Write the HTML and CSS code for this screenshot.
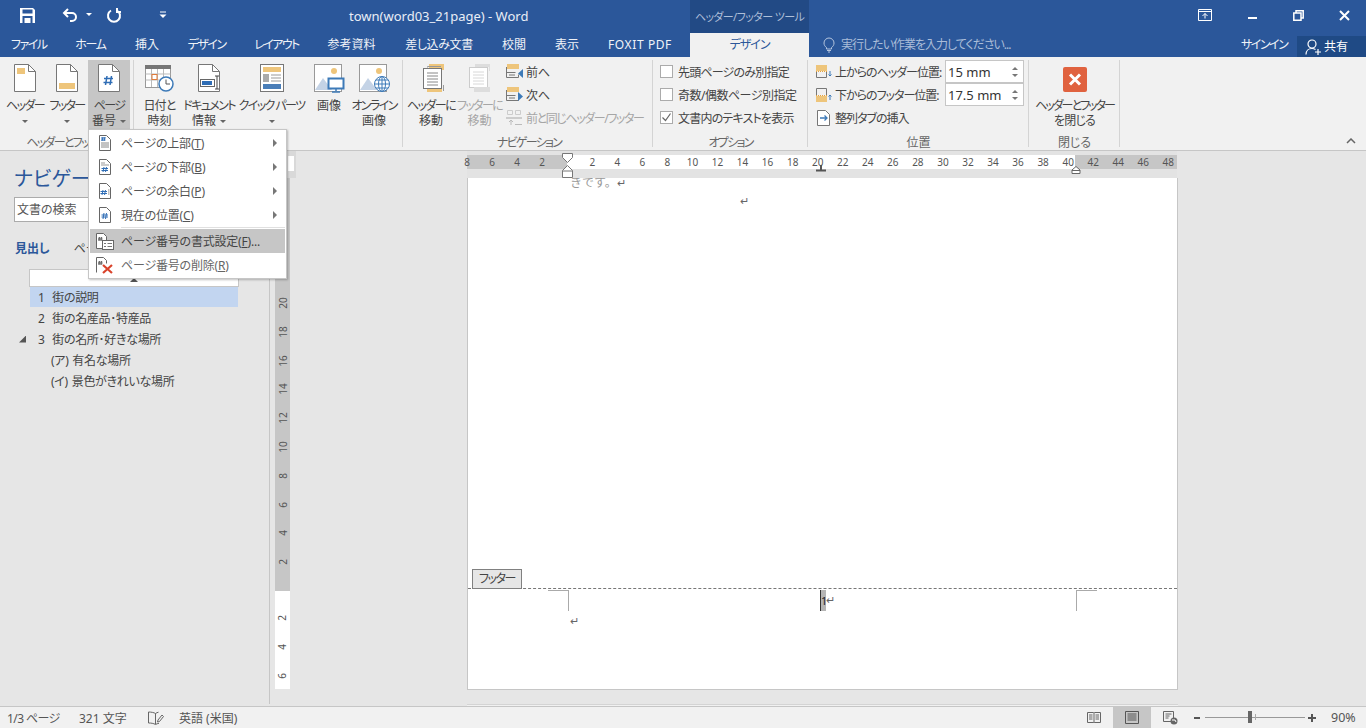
FILE: index.html
```html
<!DOCTYPE html>
<html lang="ja">
<head>
    <meta charset="UTF-8">
    <title>town(word03_21page) - Word</title>
    <link rel="stylesheet" href="styles.css">
</head>
<body>
    <!-- Title bar -->
    <div class="titlebar">
        <div class="qat">
            <svg class="qat-save" width="15" height="15" viewBox="0 0 15 15"><path d="M0 0h13l2 2v13H0z" fill="#fff"/><rect x="2.500" y="1.500" width="10" height="4" fill="#2b579a"/><path d="M2.500 8h10v7h-2V10h-6v5h-2z" fill="#2b579a"/></svg>
            <svg class="qat-undo" width="16" height="16" viewBox="0 0 16 16"><path d="M6 2 2 6l4 4M2 6h8a4 4 0 0 1 0 8H8" fill="none" stroke="#fff" stroke-width="2"/></svg>
            <span class="caret-w qat-caret"></span>
            <svg class="qat-redo" width="16" height="16" viewBox="0 0 16 16"><path d="M5 3.500a6 6 0 1 0 6 0" fill="none" stroke="#fff" stroke-width="2"/><path d="M11 1v4h4" fill="none" stroke="#fff" stroke-width="2"/></svg>
            <svg class="qat-more" width="8" height="8" viewBox="0 0 8 8"><path d="M1 1h6" stroke="#fff"/><path d="M0.500 3.500h7L4 7z" fill="#fff"/></svg>
        </div>
        <div class="doc-title">town(word03_21page) - Word</div>
        <div class="context-title">ヘッダー/フッター ツール</div>
        <div class="win-controls">
            <svg width="14" height="12" viewBox="0 0 14 12"><path d="M.5.500h13v11H.5zM.5 2.500h13" fill="none" stroke="#fff"/><path d="M7 9.500V4.500M4.500 7 7 4.500 9.500 7" fill="none" stroke="#fff"/></svg>
            <svg width="10" height="10" viewBox="0 0 10 10"><rect x="1" y="7" width="9" height="2" fill="#fff"/></svg>
            <svg width="11" height="11" viewBox="0 0 11 11"><path d="M3 2.500V.8h7.200V8H8.500M.8 3h7.200v7.200H.8z" fill="none" stroke="#fff" stroke-width="1.500"/></svg>
            <svg width="11" height="11" viewBox="0 0 11 11"><path d="m1 1 9 9M10 1l-9 9" stroke="#fff" stroke-width="2"/></svg>
        </div>
    </div>

    <!-- Tabs -->
    <div class="tabbar">
        <div class="tab tab-file">ファイル</div>
        <div class="tab tab-home">ホーム</div>
        <div class="tab tab-ins">挿入</div>
        <div class="tab tab-des">デザイン</div>
        <div class="tab tab-lay">レイアウト</div>
        <div class="tab tab-ref">参考資料</div>
        <div class="tab tab-mail">差し込み文書</div>
        <div class="tab tab-rev">校閲</div>
        <div class="tab tab-view">表示</div>
        <div class="tab tab-fox">FOXIT PDF</div>
        <div class="tab tab-active">デザイン</div>
        <div class="tell-me">
            <svg width="12" height="16" viewBox="0 0 12 16"><path d="M3.500 10.500C2 9.500 1 8 1 6a5 5 0 0 1 10 0c0 2-1 3.500-2.500 4.500v1.500h-5z" fill="none" stroke="#b5c5de"/><path d="M4 13.500h4M5 15h2" stroke="#b5c5de"/></svg>
            <span>実行したい作業を入力してください...</span>
        </div>
        <div class="signin">サインイン</div>
        <div class="share">
            <svg width="17" height="16" viewBox="0 0 17 16"><circle cx="7" cy="5" r="4" fill="none" stroke="#fff" stroke-width="1.200"/><path d="M1 15.500c0-3.500 2.500-6 6-6 1.500 0 2.500.4 3.500 1" fill="none" stroke="#fff" stroke-width="1.200"/><path d="M13 10v6M10 13h6" stroke="#fff" stroke-width="1.200"/></svg>
            <span>共有</span>
        </div>
    </div>

    <!-- Ribbon -->
    <div class="ribbon">
        <div class="group group-hf">
            <div class="group-body">
                <div class="big-btn w-header">
                    <svg width="26" height="30" viewBox="0 0 26 30"><path d="M2.500 1.500h14l7 7v20h-21z" fill="#fff" stroke="#777"/><path d="M16.500 1.500v7h7" fill="none" stroke="#777"/><rect x="5" y="5" width="8" height="6" fill="#eec57b"/></svg>
                    <span>ヘッダー</span><i class="caret"></i>
                </div>
                <div class="big-btn w-footer">
                    <svg width="26" height="30" viewBox="0 0 26 30"><path d="M2.500 1.500h14l7 7v20h-21z" fill="#fff" stroke="#777"/><path d="M16.500 1.500v7h7" fill="none" stroke="#777"/><rect x="5" y="20" width="16" height="6" fill="#eec57b"/></svg>
                    <span>フッター</span><i class="caret"></i>
                </div>
                <div class="big-btn w-pagenum is-open">
                    <svg width="26" height="30" viewBox="0 0 26 30"><path d="M2.500 1.500h14l7 7v20h-21z" fill="#fff" stroke="#777"/><path d="M16.500 1.500v7h7" fill="none" stroke="#777"/><path d="M11 13l-1.500 9M15.500 13 14 22M8 15.500h9M7.500 19.500h9" fill="none" stroke="#2f6db5" stroke-width="1.500"/></svg>
                    <span>ページ</span><span class="kj">番号<i class="caret inline"></i></span>
                </div>
            </div>
            <div class="group-label label-hf">ヘッダーとフッター</div>
        </div>

        <div class="group group-ins">
            <div class="group-body">
                <div class="big-btn w-date">
                    <svg width="32" height="30" viewBox="0 0 32 30"><rect x="2.500" y="2.500" width="25" height="22" fill="#fff" stroke="#999"/><rect x="2" y="2" width="26" height="4" fill="#777"/><path d="M2.500 11h25M2.500 17h25M8.500 6v18M14.500 6v18M20.500 6v18" stroke="#bbb"/><rect x="9" y="11.500" width="5" height="5" fill="#fff" stroke="#e07b39"/><circle cx="23" cy="21" r="7" fill="#fff" stroke="#3d7ab8" stroke-width="1.500"/><path d="M23 16.500V21h4" fill="none" stroke="#555"/></svg>
                    <span class="slight">日付と</span><span class="kj">時刻</span>
                </div>
                <div class="big-btn w-docinfo">
                    <svg width="26" height="30" viewBox="0 0 26 30"><path d="M2.500 1.500h14l7 7v20h-21z" fill="#fff" stroke="#777"/><path d="M16.500 1.500v7h7" fill="none" stroke="#777"/><rect x="4.500" y="16.500" width="14" height="7" fill="#fff" stroke="#666"/><rect x="6" y="18" width="10" height="4" fill="#2f6db5"/><path d="M19 13h4M21 13v13M19 26h4" fill="none" stroke="#444"/></svg>
                    <span>ドキュメント</span><span class="kj">情報<i class="caret inline"></i></span>
                </div>
                <div class="big-btn w-quick">
                    <svg width="26" height="30" viewBox="0 0 26 30"><rect x="1.500" y="1.500" width="23" height="27" fill="#fff" stroke="#777"/><rect x="4" y="4" width="18" height="5" fill="#eec57b"/><rect x="4" y="11" width="6" height="8" fill="#aaa"/><path d="M12 12h10M12 15h10M12 18h10" stroke="#999"/><rect x="4" y="21" width="18" height="5" fill="#4a7eb8"/></svg>
                    <span>クイック パーツ</span><i class="caret"></i>
                </div>
                <div class="big-btn w-pic">
                    <svg width="32" height="30" viewBox="0 0 32 30"><rect x="1.500" y="1.500" width="27" height="27" fill="#fff" stroke="#999"/><circle cx="21" cy="8" r="3" fill="#eec57b"/><path d="M2 27 10 15l9 12z" fill="#c4d3e6"/><rect x="15.500" y="15.500" width="15" height="10" fill="#fff" stroke="#3d7ab8" stroke-width="2"/><path d="M23 26v2M19 29h8" stroke="#3d7ab8" stroke-width="1.500"/></svg>
                    <span class="kj">画像</span>
                </div>
                <div class="big-btn w-online">
                    <svg width="32" height="30" viewBox="0 0 32 30"><rect x="1.500" y="1.500" width="27" height="27" fill="#fff" stroke="#999"/><circle cx="21" cy="8" r="3" fill="#eec57b"/><path d="M2 27 10 15l9 12z" fill="#c4d3e6"/><circle cx="24" cy="21" r="7.500" fill="#fff" stroke="#3d7ab8"/><path d="M16.500 21h15M24 13.500v15M18 17h12M18 25h12" stroke="#3d7ab8" fill="none"/><ellipse cx="24" cy="21" rx="3.500" ry="7.500" fill="none" stroke="#3d7ab8"/></svg>
                    <span>オンライン</span><span class="kj">画像</span>
                </div>
            </div>
            <div class="group-label">挿入</div>
        </div>

        <div class="group group-nav">
            <div class="group-body">
                <div class="big-btn w-gohead">
                    <svg width="26" height="30" viewBox="0 0 26 30"><rect x="8" y="1" width="15" height="6" fill="#eec57b"/><path d="M6.500 4.500v-1H20" fill="none" stroke="#999"/><rect x="2.500" y="5.500" width="18" height="20" fill="#fff" stroke="#777"/><path d="M6 10h11M6 13h11M6 16h11M6 19h11M6 22h11" stroke="#888"/><rect x="6" y="26" width="15" height="3" fill="#eec57b"/><path d="M22.500 22v6" stroke="#999"/></svg>
                    <span>ヘッダーに</span><span class="kj">移動</span>
                </div>
                <div class="big-btn w-gofoot is-disabled">
                    <svg width="26" height="30" viewBox="0 0 26 30"><rect x="8" y="1" width="15" height="3" fill="#ddd"/><path d="M22.500 4v4" stroke="#ddd"/><rect x="2.500" y="4.500" width="18" height="20" fill="#fff" stroke="#ccc"/><path d="M6 9h11M6 12h11M6 15h11M6 18h11M6 21h11" stroke="#d8d8d8"/><rect x="7" y="24" width="16" height="5" fill="#ddd"/></svg>
                    <span>フッターに</span><span class="kj">移動</span>
                </div>
                <div class="small-col">
                    <div class="small-row">
                        <svg width="18" height="16" viewBox="0 0 18 16"><rect x="1" y="0" width="12" height="5" fill="#eec57b"/><path d="M.5 3v10.500h12v-3M.5 8.500h9M3 11h6" fill="none" stroke="#777"/><path d="M17 5v9l-5-4.500z" fill="#3d7ab8"/></svg>
                        <span>前へ</span>
                    </div>
                    <div class="small-row">
                        <svg width="18" height="16" viewBox="0 0 18 16"><rect x="1" y="0" width="12" height="5" fill="#eec57b"/><path d="M.5 3v10.500h12v-3M.5 8.500h9M3 11h6" fill="none" stroke="#777"/><path d="M12 5v9l5-4.500z" fill="#3d7ab8"/></svg>
                        <span>次へ</span>
                    </div>
                    <div class="small-row is-disabled">
                        <svg width="18" height="16" viewBox="0 0 18 16"><path d="M1.500.5h5v4h-5zM9.500.5h5v4h-5z" fill="none" stroke="#ccc"/><rect x="0" y="7" width="16" height="2" fill="#ccc"/><path d="M5 15v-5M3 12l2-2 2 2M9 14.500h7" fill="none" stroke="#bbb"/></svg>
                        <span class="tight">前と同じヘッダー/フッター</span>
                    </div>
                </div>
            </div>
            <div class="group-label">ナビゲーション</div>
        </div>

        <div class="group group-opt">
            <div class="group-body opt-body">
                <label class="check-row"><i class="box"></i><span>先頭ページのみ別指定</span></label>
                <label class="check-row"><i class="box"></i><span class="wide">奇数/偶数ページ別指定</span></label>
                <label class="check-row">
                    <i class="box"><svg width="11" height="11" viewBox="0 0 11 11"><path d="m1.500 5.500 3 3 5-7" fill="none" stroke="#666" stroke-width="1.200"/></svg></i>
                    <span>文書内のテキストを表示</span>
                </label>
            </div>
            <div class="group-label">オプション</div>
        </div>

        <div class="group group-pos">
            <div class="group-body pos-body">
                <div class="pos-row">
                    <svg width="16" height="16" viewBox="0 0 16 16"><rect x="0" y="1" width="11" height="6" fill="#eec57b"/><path d="M0 7.500h11" stroke="#e8a33d" stroke-dasharray="1 1"/><path d="M.5 8v5.500h10V8" fill="none" stroke="#777"/><path d="M14 7v5M12.500 10.500 14 12l1.500-1.500" fill="none" stroke="#3d7ab8"/></svg>
                    <span class="pos-label">上からのヘッダー位置:</span>
                    <div class="spin"><span>15 mm</span><i class="spin-arrows"><b class="up"></b><b class="down"></b></i></div>
                </div>
                <div class="pos-row">
                    <svg width="16" height="16" viewBox="0 0 16 16"><path d="M.5 8V1.500h10V8" fill="none" stroke="#777"/><path d="M0 8.500h11" stroke="#e8a33d" stroke-dasharray="1 1"/><rect x="0" y="9" width="11" height="6" fill="#eec57b"/><path d="M14 13V8M12.500 9.500 14 8l1.500 1.500" fill="none" stroke="#3d7ab8"/></svg>
                    <span class="pos-label">下からのフッター位置:</span>
                    <div class="spin"><span>17.5 mm</span><i class="spin-arrows"><b class="up"></b><b class="down"></b></i></div>
                </div>
                <div class="pos-row">
                    <svg width="16" height="16" viewBox="0 0 16 16"><path d="M1.500.5h8l4 4v11h-12z" fill="#fff" stroke="#777"/><path d="M4 8h7M8.500 5.500 11 8l-2.500 2.500" fill="none" stroke="#3d7ab8" stroke-width="1.300"/></svg>
                    <span class="pos-label">整列タブの挿入</span>
                </div>
            </div>
            <div class="group-label kj">位置</div>
        </div>

        <div class="group group-close">
            <div class="group-body">
                <div class="big-btn w-close">
                    <svg width="26" height="30" viewBox="0 0 26 30"><rect x="1" y="4" width="24" height="25" rx="2" fill="#e0623f"/><path d="m8 11.500 10 10M18 11.500l-10 10" stroke="#fff" stroke-width="3"/></svg>
                    <span class="tightest">ヘッダーとフッター</span><span class="slight">を閉じる</span>
                </div>
            </div>
            <div class="group-label kj">閉じる</div>
        </div>

        <svg class="collapse" width="10" height="6" viewBox="0 0 10 6"><path d="m1 5 4-4 4 4" fill="none" stroke="#666" stroke-width="1.500"/></svg>
    </div>

    <!-- Navigation pane + document -->
    <div class="workspace">
        <div class="nav-pane">
            <div class="nav-title">ナビゲーション</div>
            <div class="nav-search">文書の検索</div>
            <div class="nav-tabs">
                <span class="nav-tab-on">見出し</span>
                <span>ページ</span>
                <span>結果</span>
            </div>
            <div class="tree">
                <div class="tree-head"><i></i></div>
                <div class="tree-row is-selected"><span class="tw"></span>1&nbsp; 街の説明</div>
                <div class="tree-row"><span class="tw"></span>2&nbsp; 街の名産品･特産品</div>
                <div class="tree-row"><span class="tw"><i class="tri"></i></span>3&nbsp; 街の名所･好きな場所</div>
                <div class="tree-row sub"><span class="tw"></span>(ア) 有名な場所</div>
                <div class="tree-row sub"><span class="tw"></span>(イ) 景色がきれいな場所</div>
            </div>
        </div>

        <div class="doc-area">
            <div class="tab-select"><i></i></div>
            <div class="vruler">
                <div class="vr-gray">
                    <span>20</span><span>18</span><span>16</span><span>14</span><span>12</span><span>10</span><span>8</span><span>6</span><span>4</span><span>2</span>
                </div>
                <div class="vr-white">
                    <span>2</span><span>4</span><span>6</span>
                </div>
            </div>
            <div class="page-col">
                <div class="hruler">
                    <div class="hr-nums">
                        <span>8</span><span>6</span><span>4</span><span>2</span><span></span><span>2</span><span>4</span><span>6</span><span>8</span><span>10</span><span>12</span><span>14</span><span>16</span><span>18</span><span>20</span><span>22</span><span>24</span><span>26</span><span>28</span><span>30</span><span>32</span><span>34</span><span>36</span><span>38</span><span>40</span><span>42</span><span>44</span><span>46</span><span>48</span>
                    </div>
                    <svg class="mark mark-indent" width="12" height="26" viewBox="0 0 12 26"><path d="M.5.500h10v4l-5 5-5-5z" fill="#fff" stroke="#777"/><path d="M5.500 12.500l5 5v7h-10v-7z" fill="#fff" stroke="#777"/><path d="M.5 18h10" stroke="#777"/></svg>
                    <svg class="mark mark-tab" width="10" height="7" viewBox="0 0 10 7"><path d="M5 0v5M0 5.500h10" stroke="#555" stroke-width="2"/></svg>
                    <svg class="mark mark-right" width="10" height="8" viewBox="0 0 10 8"><path d="M5 .5l4 3.500v3.500H1V4z" fill="#fff" stroke="#666"/><path d="M1 4.500h8" stroke="#666"/></svg>
                </div>
                <div class="page">
                    <div class="body-line clipped">きです。<span class="para">↵</span></div>
                    <div class="body-line center-mark"><span class="para">↵</span></div>
                    <div class="footer-zone">
                        <div class="footer-tab">フッター</div>
                        <div class="footer-row">
                            <i class="crop crop-l"></i>
                            <span class="cursor-num"><b>1</b></span><span class="para">↵</span>
                            <i class="crop crop-r"></i>
                        </div>
                        <div class="footer-para"><span class="para">↵</span></div>
                    </div>
                </div>
                <div class="next-page"></div>
            </div>
        </div>
    </div>

    <!-- Status bar -->
    <div class="statusbar">
        <span class="st-page">1/3 ページ</span>
        <span class="st-words">321 文字</span>
        <svg class="st-proof" width="16" height="14" viewBox="0 0 16 14"><path d="M7.500 2.500C6 1.500 3 1 .5 1v11c2.500 0 5 .3 7 1.500 1-.6 2.200-1 3.500-1.200M7.500 2.500V13M7.500 2.500c1-.7 2-1.100 3-1.300" fill="none" stroke="#666"/><path d="M10 9l-.5 2 2-.5 4-5-1.500-1.500z" fill="none" stroke="#666"/></svg>
        <span class="st-lang">英語 (米国)</span>
        <div class="st-right">
            <svg class="view-read" width="14" height="14" viewBox="0 0 14 14"><path d="M.5 1.500h6l.5.5.5-.5h6v10h-6l-.5.5-.5-.5h-6zM7 2v10M2 4h3.500M2 6h3.500M2 8h3.500M8.500 4H12M8.500 6H12M8.500 8H12" fill="none" stroke="#666"/></svg>
            <div class="view-print"><svg width="14" height="13" viewBox="0 0 14 13"><path d="M.5.500h13v12H.5zM2.500 3h9M2.500 5h9M2.500 7h9M2.500 9h9" fill="none" stroke="#555"/></svg></div>
            <svg class="view-web" width="15" height="14" viewBox="0 0 15 14"><path d="M.5.500h10v10H.5zM2.500 3h6M2.500 5h4M2.500 7h3" fill="none" stroke="#666"/><circle cx="11" cy="10" r="3.500" fill="#666"/><path d="M9 9h3l1 2" stroke="#fff" fill="none"/></svg>
            <span class="zoom-minus"></span>
            <div class="zoom-track"><i class="zoom-tick"></i><i class="zoom-thumb"></i></div>
            <span class="zoom-plus"></span>
            <span class="zoom-val">90%</span>
        </div>
    </div>

    <!-- Page number dropdown -->
    <div class="menu">
        <div class="menu-item">
            <svg width="14" height="16" viewBox="0 0 14 16"><path d="M1.500.5h7l4 4v11h-11z" fill="#fff" stroke="#666"/><path d="M5 2 4 6M7 2 6 6M3 3h4.500M3 5h4.500" stroke="#2f6db5" fill="none"/><path d="M3 8h8M3 10h8M3 12h8" stroke="#888"/></svg>
            <span>ページの上部(<u>T</u>)</span><i class="arrow"></i>
        </div>
        <div class="menu-item">
            <svg width="14" height="16" viewBox="0 0 14 16"><path d="M1.500.5h7l4 4v11h-11z" fill="#fff" stroke="#666"/><path d="M3 4h4M3 6h8" stroke="#999"/><path d="M6 8 5 13M8.500 8l-1 5M3.500 9.500H10M3.500 11.500H10" stroke="#2f6db5" fill="none"/></svg>
            <span>ページの下部(<u>B</u>)</span><i class="arrow"></i>
        </div>
        <div class="menu-item">
            <svg width="14" height="16" viewBox="0 0 14 16"><path d="M1.500.5h7l4 4v11h-11z" fill="#fff" stroke="#666"/><path d="M5 7 4 12M7.500 7l-1 5M2.500 8.500H9M2.500 10.500H9" stroke="#2f6db5" fill="none"/><path d="M10 7h1.500M10 9h1.500M10 11h1.500" stroke="#888"/></svg>
            <span>ページの余白(<u>P</u>)</span><i class="arrow"></i>
        </div>
        <div class="menu-item">
            <svg width="14" height="16" viewBox="0 0 14 16"><path d="M1.500.5h7l4 4v11h-11z" fill="#fff" stroke="#666"/><path d="M6 6 5 12M8.500 6l-1 6M3.500 8H10M3.500 10H10" stroke="#2f6db5" fill="none"/></svg>
            <span>現在の位置(<u>C</u>)</span><i class="arrow"></i>
        </div>
        <div class="menu-sep"></div>
        <div class="menu-item is-hover">
            <svg width="18" height="17" viewBox="0 0 18 17"><path d="M.5.500h7l3 3v12h-10z" fill="#fff" stroke="#666"/><path d="M3.500 4 3 8M5.500 4 5 8M2 5.200h4.500M2 6.800h4.500" stroke="#666" fill="none"/><rect x="6.500" y="7.500" width="11" height="9" fill="#fff" stroke="#666"/><path d="M8 10.500h2M8 13.500h2M11.500 10.500h4.500M11.500 13.500h4.500" stroke="#777"/></svg>
            <span>ページ番号の書式設定(<u>F</u>)...</span>
        </div>
        <div class="menu-item is-dim">
            <svg width="18" height="17" viewBox="0 0 18 17"><path d="M.5 15.500V.5h7l3 3v3" fill="none" stroke="#666"/><path d="M3.500 4 3 8M5.500 4 5 8M2 5.200h4.500M2 6.800h4.500" stroke="#666" fill="none"/><path d="m7 8 9 8M16 8l-9 8" stroke="#d9432b" stroke-width="2.200"/></svg>
            <span>ページ番号の削除(<u>R</u>)</span>
        </div>
    </div>
</body>
</html>
```

FILE: styles.css
```css
/* Basic Styles */
* {
    box-sizing: border-box;
}
body {
    margin: 0;
    width: 1366px;
    height: 728px;
    overflow: hidden;
    position: relative;
    display: flex;
    flex-direction: column;
    background: #e6e6e6;
    color: #444;
    font-family: "Noto Sans", "Noto Sans CJK JP", sans-serif;
    font-size: 12px;
    font-feature-settings: "palt";
}
i { font-style: normal; display: block; }
svg { display: block; flex: none; }

/* Title bar */
.titlebar {
    height: 33px;
    flex: none;
    display: flex;
    background: #2b579a;
    color: #e9eef6;
}
.qat {
    width: 349px;
    display: flex;
    align-items: center;
}
.qat-save { margin-left: 20px; margin-top: -3px; }
.qat-undo { margin-left: 27px; margin-top: -3px; }
.qat-caret { margin-left: 8px; margin-top: -4px; }
.qat-redo { margin-left: 14px; margin-top: -3px; }
.qat-more { margin-left: 37px; margin-top: -3px; }
.caret-w {
    width: 0;
    height: 0;
    border: 3px solid transparent;
    border-top: 3px solid #fff;
    border-bottom: 0;
}
.doc-title {
    width: 341px;
    font-size: 13px;
    line-height: 33px;
}
.context-title {
    width: 119px;
    background: #224a85;
    color: #aebfd9;
    font-size: 11px;
    letter-spacing: -0.6px;
    line-height: 33px;
    text-align: center;
    white-space: nowrap;
}
.win-controls {
    flex: 1;
    display: flex;
    align-items: center;
    padding: 0 16px 3px 389px;
    justify-content: space-between;
}

/* Tabs */
.tabbar {
    height: 24px;
    flex: none;
    display: flex;
    background: #2b579a;
    color: #f0f3f8;
    line-height: 24px;
    white-space: nowrap;
}
.tab { flex: none; text-align: center; }
.tab-file { width: 35px; margin-left: 11px; letter-spacing: -1.5px; }
.tab-home { width: 31px; margin-left: 29px; letter-spacing: -1.3px; }
.tab-ins { width: 24px; margin-left: 29px; }
.tab-des { width: 39px; margin-left: 28px; letter-spacing: -1.5px; }
.tab-lay { width: 45px; margin-left: 28px; letter-spacing: -1.6px; }
.tab-ref { width: 49px; margin-left: 28px; }
.tab-mail { width: 68px; margin-left: 29px; letter-spacing: -0.4px; }
.tab-rev { width: 24px; margin-left: 29px; }
.tab-view { width: 24px; margin-left: 29px; }
.tab-fox { width: 64px; margin-left: 29px; letter-spacing: 0.6px; }
.tab-active {
    width: 119px;
    margin-left: 18px;
    background: #f1f1f1;
    color: #2b579a;
    letter-spacing: -1px;
}
.tell-me {
    flex: 1;
    display: flex;
    align-items: center;
    gap: 6px;
    padding-left: 14px;
    color: #a9bcd8;
    letter-spacing: -1px;
}
.signin { width: 56px; letter-spacing: -1.5px; }
.share {
    width: 69px;
    height: 21px;
    margin-top: 3px;
    display: flex;
    align-items: center;
    gap: 2px;
    padding-left: 8px;
    background: #1f4a85;
    line-height: 21px;
    color: #fff;
}

/* Ribbon */
.ribbon {
    height: 94px;
    flex: none;
    display: flex;
    position: relative;
    background: #f1f1f1;
    border-bottom: 1px solid #c6c6c6;
}
.group {
    height: 93px;
    display: flex;
    flex-direction: column;
    flex: none;
    position: relative;
    padding-top: 3px;
}
.group::after {
    content: "";
    position: absolute;
    right: 0;
    top: 3px;
    height: 87px;
    width: 1px;
    background: #d4d4d4;
}
.group-hf { width: 134px; padding-left: 4px; }
.group-ins { width: 269px; padding-left: 6px; }
.group-nav { width: 250px; padding-left: 2px; }
.group-opt { width: 155px; }
.group-pos { width: 221px; }
.group-close { width: 91px; }
.group-body {
    height: 69px;
    display: flex;
    flex: none;
}
.group-label {
    text-align: center;
    color: #666;
    line-height: 16px;
    margin-top: 6px;
    letter-spacing: -1.7px;
    white-space: nowrap;
}
.group-label.kj { letter-spacing: 0; }
.label-hf { padding-right: 4px; }
.big-btn {
    display: flex;
    flex-direction: column;
    align-items: center;
    flex: none;
    line-height: 15px;
    padding-top: 3px;
    white-space: nowrap;
    letter-spacing: -1.6px;
}
.big-btn .kj { letter-spacing: 0; }
.big-btn .slight { letter-spacing: -0.8px; }
.big-btn .tightest { letter-spacing: -2px; }
.big-btn svg { margin-bottom: 5px; }
.big-btn.is-open { background: #c6c6c6; }
.is-disabled { color: #a6a6a6; }
.w-header { width: 42px; }
.w-footer { width: 42px; }
.w-pagenum { width: 42px; }
.w-date { width: 39px; }
.w-date svg { margin-left: -1px; }
.w-docinfo { width: 56px; margin-left: 2px; }
.w-quick { width: 69px; }
.w-pic { width: 40px; margin-left: 3px; }
.w-online { width: 50px; }
.w-gohead { width: 52px; }
.w-gohead svg { margin-left: 6px; }
.w-gofoot { width: 45px; margin-right: 4px; }
.w-close { width: 91px; }
.caret {
    width: 0;
    height: 0;
    margin-top: 7px;
    border: 3px solid transparent;
    border-top: 3px solid #666;
    border-bottom: 0;
}
.caret.inline {
    display: inline-block;
    margin: 0 0 2px 4px;
}

.small-col { display: flex; flex-direction: column; }
.small-row {
    height: 23px;
    display: flex;
    align-items: center;
    gap: 2px;
    white-space: nowrap;
}
.tight { letter-spacing: -1.4px; }

.opt-body, .pos-body { flex-direction: column; }
.check-row {
    height: 23px;
    display: flex;
    align-items: center;
    gap: 5px;
    padding-left: 7px;
    white-space: nowrap;
    letter-spacing: -0.8px;
}
.check-row .wide { letter-spacing: -0.5px; }
.box {
    width: 13px;
    height: 13px;
    background: #fff;
    border: 1px solid #ababab;
}
.pos-row {
    height: 23px;
    display: flex;
    align-items: center;
    padding-left: 8px;
    white-space: nowrap;
}
.pos-label { width: 110px; margin-left: 3px; letter-spacing: -1px; }
.spin {
    width: 79px;
    height: 23px;
    display: flex;
    align-items: center;
    justify-content: space-between;
    padding: 0 5px 0 2px;
    background: #fff;
    border: 1px solid #c6c6c6;
    font-size: 13px;
    color: #333;
}
.spin-arrows { display: flex; flex-direction: column; gap: 4px; }
.spin-arrows b {
    display: block;
    width: 0;
    height: 0;
    border: 3px solid transparent;
}
.spin-arrows .up { border-bottom: 3px solid #777; border-top: 0; }
.spin-arrows .down { border-top: 3px solid #777; border-bottom: 0; }
.collapse {
    position: absolute;
    right: 10px;
    bottom: 6px;
}

/* Workspace */
.workspace {
    height: 556px;
    flex: none;
    display: flex;
    background: #e6e6e6;
    border-bottom: 1px solid #c6c6c6;
}
.nav-pane {
    width: 270px;
    height: 553px;
    flex: none;
    border-right: 1px solid #c6c6c6;
    padding-top: 14px;
}
.nav-title {
    font-size: 20px;
    line-height: 28px;
    color: #2b579a;
    padding-left: 14px;
    white-space: nowrap;
}
.nav-search {
    width: 248px;
    height: 25px;
    margin: 4px 0 0 14px;
    padding-left: 2px;
    line-height: 23px;
    background: #fff;
    border: 1px solid #ababab;
    color: #555;
}
.nav-tabs {
    display: flex;
    gap: 24px;
    padding-left: 15px;
    margin-top: 18px;
    line-height: 17px;
}
.nav-tab-on { color: #2b579a; font-weight: 700; }
.tree { margin-top: 12px; padding-left: 29px; letter-spacing: -0.3px; word-spacing: 1px; }
.tree-head {
    width: 210px;
    height: 18px;
    background: #fff;
    border: 1px solid #c6c6c6;
    display: flex;
    justify-content: center;
    padding-top: 8px;
}
.tree-head i {
    width: 0;
    height: 0;
    border: 4px solid transparent;
    border-bottom: 4px solid #555;
    border-top: 0;
}
.tree-row {
    display: flex;
    height: 21px;
    width: 208px;
    margin-left: 1px;
    align-items: center;
    white-space: pre;
    color: #444;
}
.tree-row.is-selected { background: #c2d5f0; height: 20px; }
.tw { width: 8px; flex: none; position: relative; }
.sub { padding-left: 13px; }
.tri {
    position: absolute;
    left: -11px;
    top: -3px;
    width: 7px;
    height: 7px;
    background: #555;
    clip-path: polygon(100% 0, 100% 100%, 0 100%);
}

/* Document area */
.doc-area {
    flex: 1;
    display: flex;
    position: relative;
}
.tab-select {
    position: absolute;
    left: 16px;
    top: 0;
    width: 10px;
    height: 27px;
    background: #d9d9d9;
    padding: 5px 2px;
}
.tab-select i { height: 15px; background: #fff; }
.vruler {
    width: 15px;
    margin: 27px 0 0 5px;
    height: 511px;
    flex: none;
    display: flex;
    flex-direction: column;
    font-size: 10px;
    color: #555;
}
.vr-gray {
    height: 413px;
    flex: none;
    background: #c6c6c6;
    display: flex;
    flex-direction: column;
    justify-content: flex-end;
    padding-bottom: 14px;
}
.vr-white {
    height: 98px;
    flex: none;
    background: #fff;
    padding-top: 13px;
}
.vruler span {
    display: flex;
    height: 28.8px;
    align-items: center;
    justify-content: center;
    writing-mode: vertical-rl;
    transform: rotate(180deg);
}
.page-col {
    flex: 1;
    padding-left: 177px;
    display: flex;
    flex-direction: column;
}
.hruler {
    width: 710px;
    height: 27px;
    flex: none;
    position: relative;
    padding-top: 4px;
    background: #e3e3e3;
}
.hr-nums {
    height: 14px;
    display: flex;
    background: linear-gradient(90deg, #c6c6c6 100px, #fff 100px, #fff 608px, #c6c6c6 608px);
    font-size: 10px;
    line-height: 14px;
    color: #555;
}
.hr-nums span {
    flex: none;
    width: 25.05px;
    text-align: center;
}
.hr-nums span:first-child { margin-left: -12.5px; }
.mark { position: absolute; }
.mark-indent { left: 95px; top: 2px; }
.mark-tab { left: 349px; top: 14px; }
.mark-right { left: 604px; top: 15px; }

.page {
    width: 711px;
    height: 512px;
    flex: none;
    background: #fff;
    border-left: 1px solid #c6c6c6;
    border-right: 1px solid #c6c6c6;
    border-bottom: 1px solid #c6c6c6;
    display: flex;
    flex-direction: column;
    color: #999;
}
.body-line {
    height: 20px;
    line-height: 20px;
    white-space: nowrap;
    flex: none;
}
.clipped {
    height: 13px;
    line-height: 10px;
    overflow: hidden;
    padding-left: 102px;
    font-feature-settings: normal;
}
.center-mark { padding-left: 272px; }
.para { font-size: 11px; color: #666; }
.footer-zone {
    margin-top: auto;
    height: 101px;
    position: relative;
    border-top: 1px dashed #777;
}
.footer-tab {
    position: absolute;
    left: 4px;
    top: -20px;
    width: 50px;
    height: 20px;
    background: #e6e6e6;
    border: 1px solid #808080;
    color: #444;
    letter-spacing: -1.4px;
    line-height: 18px;
    text-align: center;
}
.footer-row {
    height: 22px;
    padding-top: 1px;
    display: flex;
    align-items: flex-start;
    line-height: 20px;
}
.crop {
    width: 21px;
    height: 21px;
    border-top: 1px solid #aaa;
    flex: none;
}
.crop-l {
    margin-left: 80px;
    border-right: 1px solid #aaa;
}
.crop-r {
    margin-left: 241px;
    border-left: 1px solid #aaa;
}
.cursor-num {
    margin-left: 251px;
    width: 6px;
    height: 21px;
    background: #b5b5b5;
    border-left: 1px solid #333;
    color: #222;
    font-size: 11px;
    line-height: 21px;
}
.cursor-num b { font-weight: 400; }
.footer-para {
    padding-left: 102px;
    line-height: 20px;
}
.next-page {
    width: 711px;
    height: 1px;
    margin-top: 14px;
    background: #f1f1f1;
    border-top: 1px solid #d4d4d4;
    box-sizing: content-box;
}

/* Status bar */
.statusbar {
    flex: 1;
    display: flex;
    align-items: center;
    background: #f1f1f1;
    color: #555;
    white-space: nowrap;
}
.st-page { margin-left: 7px; width: 72px; letter-spacing: -0.6px; }
.st-words { width: 69px; }
.st-proof { margin-right: 15px; }
.st-right {
    margin-left: auto;
    display: flex;
    align-items: center;
    height: 100%;
}
.view-print {
    width: 38px;
    height: 100%;
    margin: 0 12px;
    background: #c6c6c6;
    display: flex;
    align-items: center;
    justify-content: center;
}
.view-web { margin-right: 16px; }
.zoom-minus {
    width: 6px;
    height: 2px;
    background: #555;
}
.zoom-track {
    width: 100px;
    height: 1px;
    margin-left: 5px;
    background: #999;
    position: relative;
}
.zoom-thumb {
    position: absolute;
    left: 43px;
    top: -6px;
    width: 4px;
    height: 12px;
    background: #666;
}
.zoom-tick {
    position: absolute;
    left: 50px;
    top: -3px;
    width: 1px;
    height: 6px;
    background: #aaa;
}
.zoom-plus {
    width: 8px;
    height: 8px;
    margin-left: 3px;
    background: linear-gradient(#555, #555) center / 8px 2px no-repeat,
                linear-gradient(#555, #555) center / 2px 8px no-repeat;
}
.zoom-val {
    width: 26px;
    margin: 0 9px 0 15px;
    font-size: 12.5px;
}

/* Page number menu */
.menu {
    position: absolute;
    left: 88px;
    top: 129px;
    width: 199px;
    height: 150px;
    padding: 1px;
    background: #fff;
    border: 1px solid #c6c6c6;
    box-shadow: 1px 1px 2px rgba(0, 0, 0, 0.25);
    color: #555;
    letter-spacing: -0.2px;
}
.menu-item {
    height: 24px;
    display: flex;
    align-items: center;
    position: relative;
    padding-left: 6px;
    white-space: nowrap;
}
.menu-item svg { width: 18px; }
.menu-item span { position: absolute; left: 31px; }
.menu-item .arrow {
    position: absolute;
    right: 8px;
    top: 8px;
    width: 0;
    height: 0;
    border: 4px solid transparent;
    border-left: 4px solid #777;
    border-right: 0;
}
.menu-sep {
    height: 1px;
    margin: 0 0 1px 31px;
    background: #e0e0e0;
}
.menu-item.is-hover { background: #c6c6c6; color: #444; }
.menu-item.is-dim { color: #666; }
```
